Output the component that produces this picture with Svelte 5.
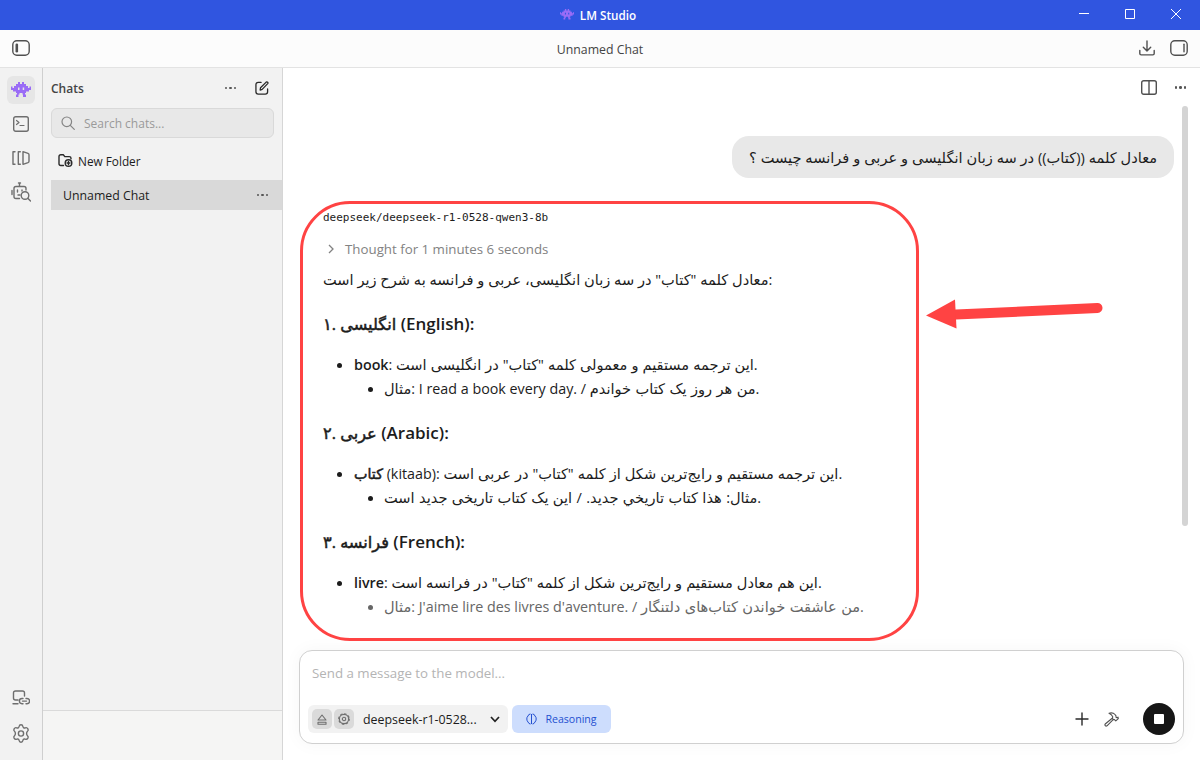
<script>
	const sections = [
		{
			number: '۱',
			name: 'انگلیسی',
			language: '(English):',
			term: 'book',
			rest: ': ',
			text: 'این ترجمه مستقیم و معمولی کلمه "کتاب" در انگلیسی است.',
			label: 'مثال',
			latin: ': I read a book every day. / ',
			sample: 'من هر روز یک کتاب خواندم.'
		},
		{
			number: '۲',
			name: 'عربی',
			language: '(Arabic):',
			term: 'کتاب',
			rtlTerm: true,
			rest: ' (kitaab): ',
			text: 'این ترجمه مستقیم و رایج‌ترین شکل از کلمه "کتاب" در عربی است.',
			label: '',
			latin: '',
			sample: 'مثال: هذا كتاب تاريخي جديد. / این یک کتاب تاریخی جدید است.'
		},
		{
			number: '۳',
			name: 'فرانسه',
			language: '(French):',
			term: 'livre',
			rest: ': ',
			text: 'این هم معادل مستقیم و رایج‌ترین شکل از کلمه "کتاب" در فرانسه است.',
			label: 'مثال',
			latin: ": J'aime lire des livres d'aventure. / ",
			sample: 'من عاشقت خواندن کتاب‌های دلتنگار.',
			faded: true
		}
	];
</script>

{#snippet invader(size)}
	<svg class="invader" width={size} height={size * 0.8} viewBox="0 0 20 16">
		<path
			fill="#9a6cf6"
			fill-rule="evenodd"
			d="M7 0h2v2h2V0h2v2h2v2h2v2h1.500V4.500H20V8h-2v1.500h-3V11h-1v1.500h1V15h-3v-2.500h-.5V11h-3v1.500H7.500V15H5v-2.500h1V11H5V9.500H2V8H0V4.500h1.500V6H3V4h2V2h2zM7 5.500V8h1.500V5.500zM11.700 5.500V8h1.500V5.500z"
		/>
	</svg>
{/snippet}

{#snippet dots(gap)}
	<span class="dots" style="gap: {gap}px"><i></i><i></i><i></i></span>
{/snippet}

<div class="app">
	<div class="titlebar">
		<div class="brand">
			{@render invader(14)}
			<b>LM Studio</b>
		</div>
		<div class="window-buttons">
			<svg width="12" height="12" viewBox="0 0 12 12"><path d="M1 5.500h10" /></svg>
			<svg width="12" height="12" viewBox="0 0 12 12"><path d="M1.500 1.500h9v9h-9z" /></svg>
			<svg width="12" height="12" viewBox="0 0 12 12"><path d="M1 1l10 10M11 1L1 11" /></svg>
		</div>
	</div>

	<header>
		<svg class="icon dark" width="18" height="16" viewBox="0 0 18 16">
			<rect x=".8" y=".8" width="16.400" height="14.400" rx="4" />
			<path d="M4.800 4.800v6.400" stroke-width="2.600" />
		</svg>
		<span class="title">Unnamed Chat</span>
		<div class="header-right">
			<svg class="icon dark" width="16" height="16" viewBox="0 0 16 16">
				<path d="M8 1v10M4.300 7.200L8 11l3.700-3.800M.8 10.500v3q0 1.400 1.400 1.400h11.600q1.400 0 1.400-1.400v-3" />
			</svg>
			<svg class="icon dark" width="18" height="16" viewBox="0 0 18 16">
				<rect x=".8" y=".8" width="16.400" height="14.400" rx="4" />
				<path d="M14 4.200v7.600" />
			</svg>
		</div>
	</header>

	<div class="body">
		<nav>
			<div class="nav-top">
				<div class="nav-item active">{@render invader(20)}</div>
				<div class="nav-item">
					<svg class="icon" width="16" height="16" viewBox="0 0 16 16">
						<rect x=".7" y=".7" width="14.600" height="14.600" rx="2" />
						<path d="M3.500 4.500L6 6.500 3.500 8.500M7 9.500h4" stroke-width="1.200" />
					</svg>
				</div>
				<div class="nav-item">
					<svg class="icon" width="18" height="14" viewBox="0 0 18 14">
						<path d="M3 .7H1v12.600h2M8.300 .7H6.300v12.600h2M11 .7v12.600l5-1.600q1-.4 1-1.400V3.700q0-1-1-1.400z" />
					</svg>
				</div>
				<div class="nav-item">
					<svg class="icon" width="20" height="20" viewBox="0 0 20 20">
						<path d="M8.500 4V1M7.500 1h2M8.500 16.500H5q-2 0-2-2V6.500q0-2 2-2h8q2 0 2 2V8M1 8.500v4M6.500 8v2M11 8v1M7 13h2" />
						<circle cx="14" cy="13.500" r="3.800" />
						<path d="M17 16.500l2.500 2.500" />
					</svg>
				</div>
			</div>
			<div class="nav-bottom">
				<svg class="icon" width="18" height="16" viewBox="0 0 18 16">
					<path d="M12.500 6V3q0-2-2-2H3.500q-2 0-2 2v5q0 2 2 2H6M1 13.800h5M11 8.500h-1a2.600 2.600 0 0 0 0 5.200h1M14 8.500h1a2.600 2.600 0 0 1 0 5.200h-1M10.500 11.100h4" />
				</svg>
				<svg class="icon" width="18" height="19" viewBox="0 0 18 19">
					<path
						d="M9 .8c1.200 0 1.700.5 1.900 1.700.2 1.200 1.200 1.800 2.400 1.300 1.300-.5 2 0 2.600 1 .6 1.100.5 1.700-.4 2.500-1.200 1-1.200 3.400 0 4.400.9.800 1 1.400.4 2.500-.6 1-1.300 1.500-2.600 1-1.200-.5-2.200.1-2.400 1.300-.2 1.200-.7 1.700-1.900 1.700s-1.700-.5-1.900-1.700c-.2-1.200-1.200-1.800-2.400-1.300-1.300.5-2 0-2.600-1-.6-1.100-.5-1.700.4-2.500 1.200-1 1.200-3.400 0-4.400-.9-.8-1-1.400-.4-2.500.6-1 1.300-1.500 2.600-1 1.200.5 2.200-.1 2.400-1.300C7.300 1.300 7.800.8 9 .8z"
					/>
					<circle cx="9" cy="9.500" r="2.600" />
				</svg>
			</div>
		</nav>

		<aside>
			<div class="chats-head">
				<span>Chats</span>
				{@render dots(2)}
				<svg class="icon black" width="14" height="14" viewBox="0 0 15 15">
					<path d="M6.500 1.500H3.500q-2.500 0-2.500 2.500v7.500q0 2.500 2.500 2.500H11q2.500 0 2.500-2.500V8.500M5.500 9.700l.4-2.400L12 1.200q.8-.6 1.500.1t.1 1.500L7.700 9z" />
				</svg>
			</div>
			<div class="search">
				<svg class="icon" width="14" height="14" viewBox="0 0 14 14">
					<circle cx="5.800" cy="5.800" r="4.800" />
					<path d="M9.300 9.300l4 4" />
				</svg>
				<span>Search chats...</span>
			</div>
			<div class="new-folder">
				<svg class="icon black" width="15" height="13" viewBox="0 0 15 13">
					<path d="M5.500 11.500H2.800q-1.800 0-1.800-1.800V2.500Q1 .8 2.800.8h2.500l1.500 1.800h4.400q1.800 0 1.800 1.600v.6" />
					<circle cx="10.500" cy="9" r="3.300" />
					<path d="M10.500 7.500v3M9 9h3" />
				</svg>
				<span>New Folder</span>
			</div>
			<div class="chat-row">
				<span>Unnamed Chat</span>
				{@render dots(2)}
			</div>
			<div class="aside-foot"></div>
		</aside>

		<main>
			<div class="toolbar">
				<svg class="icon dark" width="16" height="15" viewBox="0 0 16 15">
					<rect x=".7" y=".7" width="14.600" height="13.600" rx="2" />
					<path d="M8 1v13" />
				</svg>
				{@render dots(2)}
			</div>

			<div class="thread">
				<div class="bubble fa" dir="rtl">معادل کلمه ((کتاب)) در سه زبان انگلیسی و عربی و فرانسه چیست ؟</div>

				<div class="answer">
					<div class="model">deepseek/deepseek-r1-0528-qwen3-8b</div>
					<div class="thought">
						<svg width="6" height="10" viewBox="0 0 6 10"><path d="M1 1l4 4-4 4" /></svg>
						<span>Thought for 1 minutes 6 seconds</span>
					</div>
					<p class="fa">معادل کلمه "کتاب" در سه زبان انگلیسی، عربی و فرانسه به شرح زیر است:</p>
					{#each sections as s}
						<h3><span class="fa-bold">{s.number}. {s.name}</span> {s.language}</h3>
						<ul>
							<li>
								<strong class:fa-bold={s.rtlTerm}>{s.term}</strong>{s.rest}<span class="fa">{s.text}</span>
								<ul>
									<li class:faded={s.faded}><span class="fa">{s.label}</span>{s.latin}<span class="fa sample">{s.sample}</span></li>
								</ul>
							</li>
						</ul>
					{/each}
				</div>
			</div>

			<div class="composer">
				<div class="placeholder">Send a message to the model...</div>
				<div class="controls">
					<div class="model-picker">
						<span class="mini">
							<svg class="icon" width="10" height="11" viewBox="0 0 10 11"><path d="M5 1L9 6H1zM1 8.300h8v2H1z" /></svg>
						</span>
						<span class="mini">
							<svg class="icon" width="12" height="12" viewBox="0 0 12 12">
								<circle cx="6" cy="6" r="4.600" />
								<circle cx="6" cy="6" r="5.300" stroke-dasharray="1.600 2.560" />
								<circle cx="6" cy="6" r="1.700" />
							</svg>
						</span>
						<span class="name">deepseek-r1-0528...</span>
						<svg class="chevron" width="10" height="7" viewBox="0 0 10 7"><path d="M1 1l4 4.300L9 1" /></svg>
					</div>
					<div class="reasoning">
						<svg width="11" height="12" viewBox="0 0 11 12">
							<path d="M5.500 1v10M4.500 1Q2.500 1 2 3 .7 4 .8 6T2 9q.8 2 2.500 2M6.500 1Q8.500 1 9 3q1.300 1 1.200 3T9 9q-.8 2-2.500 2" />
						</svg>
						<span>Reasoning</span>
					</div>
					<div class="actions">
						<svg class="icon black" width="14" height="14" viewBox="0 0 14 14"><path d="M7 1v12M1 7h12" /></svg>
						<svg class="icon dark hammer" width="15" height="15" viewBox="0 0 15 15">
							<path d="M5 1.200Q9 .2 11 2.500l1 1.300v1.500l1 .5 1-.7.300 1.500-2.500 2.300-1.300-1.300-1.200-.2-1-1 .5-1.500Q8 2.500 5 1.200zM8.200 6.300L1.200 12q-.6 1 .1 1.700t1.700.1L9.400 7.300" />
						</svg>
						<div class="stop"><i></i></div>
					</div>
				</div>
			</div>
		</main>
	</div>

	<div class="scroll-thumb"></div>
	<div class="highlight"></div>
	<svg class="arrow" width="180" height="34" viewBox="0 0 180 34">
		<path d="M30 19.500L171.500 13" stroke="#ff4343" stroke-width="10" stroke-linecap="round" />
		<path d="M0 20.500L29 4.500l1.500 29z" fill="#ff4343" />
	</svg>
</div>

<style>
	:global(body) {
		margin: 0;
		background: #fff;
	}
	.app {
		position: relative;
		display: flex;
		flex-direction: column;
		width: 1200px;
		height: 760px;
		overflow: hidden;
		font-family: 'Open Sans', 'DejaVu Sans', sans-serif;
		font-size: 12.3px;
		color: #1c1c1c;
	}
	svg {
		display: block;
		flex: none;
		fill: none;
	}
	.icon {
		stroke: #6e6e6e;
		stroke-width: 1.4;
		stroke-linecap: round;
		stroke-linejoin: round;
	}
	.icon.dark {
		stroke: #505050;
	}
	.icon.black {
		stroke: #2a2a2a;
	}
	.dots {
		display: flex;
		color: #555;
	}
	.dots i {
		width: 2.5px;
		height: 2.5px;
		border-radius: 50%;
		background: currentColor;
	}

	.titlebar {
		display: grid;
		grid-template-columns: 1fr auto 1fr;
		align-items: center;
		height: 30px;
		background: #3055e0;
		color: #fff;
	}
	.brand {
		grid-column: 2;
		display: flex;
		align-items: center;
		gap: 6px;
		margin-right: 4px;
		font-size: 11.7px;
	}
	.brand b {
		font-weight: 600;
	}
	.window-buttons {
		display: flex;
		justify-content: flex-end;
		gap: 34px;
		padding: 0 18px 2px 0;
		stroke: #fff;
		stroke-width: 1;
	}

	header {
		display: grid;
		grid-template-columns: 1fr auto 1fr;
		align-items: center;
		box-sizing: border-box;
		height: 38px;
		padding: 0 12px 1px;
		border-bottom: 1px solid #e3e3e3;
		background: #fcfcfc;
	}
	.title {
		padding-top: 2px;
		color: #444;
	}
	.header-right {
		display: flex;
		justify-content: flex-end;
		gap: 15px;
	}

	.body {
		display: flex;
		flex: 1;
		min-height: 0;
	}
	nav {
		display: flex;
		flex-direction: column;
		justify-content: space-between;
		align-items: center;
		box-sizing: border-box;
		width: 43px;
		padding: 8px 0 17px;
		border-right: 1px solid #cfcfcf;
		background: #f2f2f2;
	}
	.nav-top {
		display: flex;
		flex-direction: column;
		gap: 6px;
	}
	.nav-item {
		display: grid;
		place-items: center;
		width: 28px;
		height: 28px;
		border-radius: 6px;
	}
	.nav-item.active {
		background: #e6e6e6;
	}
	.nav-bottom {
		display: flex;
		flex-direction: column;
		align-items: center;
		gap: 18px;
	}

	aside {
		display: flex;
		flex-direction: column;
		box-sizing: border-box;
		width: 240px;
		border-right: 1px solid #d6d6d6;
		background: #f2f2f2;
	}
	.chats-head {
		display: flex;
		align-items: center;
		height: 40px;
		padding: 0 13px 0 8px;
		font-weight: 600;
		font-size: 12px;
		color: #444;
	}
	.chats-head .dots {
		margin: 0 19px 0 auto;
	}
	.search {
		display: flex;
		align-items: center;
		gap: 9px;
		box-sizing: border-box;
		height: 30px;
		margin: 0 8px;
		padding-left: 9px;
		border: 1px solid #d9d9d9;
		border-radius: 6px;
		background: #e8e8e8;
		font-size: 12px;
		color: #9a9a9a;
	}
	.search .icon {
		stroke: #858585;
		stroke-width: 1.2;
	}
	.new-folder {
		display: flex;
		align-items: center;
		gap: 5px;
		height: 42px;
		padding: 3px 15px 0;
		box-sizing: border-box;
		font-size: 11.8px;
		font-weight: 500;
	}
	.chat-row {
		display: flex;
		justify-content: space-between;
		align-items: center;
		height: 30px;
		margin-left: 8px;
		padding: 0 14px 0 12px;
		background: #d9d9d9;
	}
	.aside-foot {
		height: 49px;
		margin-top: auto;
		border-top: 1px solid #dadada;
		background: #f5f5f4;
	}

	main {
		display: flex;
		flex-direction: column;
		flex: 1;
		min-width: 0;
		padding-right: 16px;
		background: #fff;
	}
	.toolbar {
		display: flex;
		justify-content: flex-end;
		align-items: center;
		gap: 18px;
		height: 39px;
		margin-right: -2px;
	}
	.thread {
		flex: 1;
		display: flex;
		flex-direction: column;
		min-height: 0;
		padding: 29px 10px 0 40px;
		font-size: 14.3px;
	}
	.bubble {
		align-self: flex-end;
		box-sizing: border-box;
		height: 42px;
		padding: 0 17px;
		border-radius: 17px;
		background: #e8e8e8;
		line-height: 42px;
		white-space: nowrap;
		word-spacing: 0.1px;
	}
	.fa {
		font-size: 14.6px;
	}
	.fa-bold {
		font-weight: 400;
		-webkit-text-stroke: 0.5px currentColor;
	}
	.answer {
		padding-top: 30px;
		line-height: 24px;
		white-space: nowrap;
	}
	.model {
		height: 18px;
		font-family: 'DejaVu Sans Mono', monospace;
		font-size: 11px;
		line-height: 19px;
	}
	.thought {
		display: flex;
		align-items: center;
		gap: 11px;
		height: 24px;
		margin-top: 11px;
		padding-left: 5px;
		font-size: 13.3px;
		color: #828282;
	}
	.thought svg {
		stroke: #828282;
		stroke-width: 1.3;
	}
	p {
		height: 24px;
		margin: 6px 0 21px;
	}
	h3 {
		height: 24px;
		margin: 20px 0 17px;
		font-size: 17px;
		font-weight: 600;
	}
	h3 .fa-bold {
		font-size: 16.2px;
	}
	ul {
		margin: 0;
		padding: 0;
		list-style: none;
	}
	li {
		position: relative;
		padding-left: 31px;
		line-height: 24px;
	}
	li span,
	li strong {
		line-height: 0;
	}
	li li {
		padding-left: 30px;
	}
	li .fa {
		word-spacing: 0.2px;
	}
	li .sample {
		word-spacing: 0.6px;
	}
	li::before {
		content: '';
		position: absolute;
		left: 14px;
		top: 10px;
		width: 5px;
		height: 5px;
		border-radius: 50%;
		background: currentColor;
	}
	strong {
		font-weight: 600;
	}
	.faded {
		color: #666;
	}

	.composer {
		display: flex;
		flex-direction: column;
		justify-content: space-between;
		box-sizing: border-box;
		height: 94px;
		margin: 0 0 16px 16px;
		padding: 13px 8px 8px;
		border: 1px solid #d0d0d0;
		border-radius: 13px;
		background: #fff;
		box-shadow: 0 0 18px rgba(0, 0, 0, 0.04);
	}
	.placeholder {
		padding-left: 4px;
		font-size: 13.3px;
		color: #b4b4b4;
	}
	.controls {
		display: flex;
		align-items: center;
		height: 32px;
	}
	.model-picker {
		display: flex;
		align-items: center;
		box-sizing: border-box;
		width: 200px;
		height: 28px;
		padding: 0 8px 0 4px;
		border-radius: 6px;
		background: #f2f2f2;
	}
	.mini {
		display: grid;
		place-items: center;
		width: 20px;
		height: 20px;
		margin-right: 2px;
		border-radius: 5px;
		background: #dadada;
	}
	.mini .icon {
		stroke-width: 1.1;
	}
	.name {
		margin-left: 7px;
		font-size: 12.4px;
	}
	.chevron {
		margin-left: auto;
		stroke: #222;
		stroke-width: 1.7;
	}
	.reasoning {
		display: flex;
		align-items: center;
		justify-content: center;
		gap: 8px;
		width: 99px;
		height: 28px;
		margin-left: 4px;
		border-radius: 6px;
		background: #cdddfd;
		font-size: 10.6px;
		font-weight: 500;
		color: #2450d0;
	}
	.reasoning svg {
		stroke: #2450d0;
	}
	.actions {
		display: flex;
		align-items: center;
		margin-left: auto;
	}
	.hammer {
		margin: 0 24px 0 15px;
		stroke-width: 1.1;
	}
	.stop {
		display: grid;
		place-items: center;
		width: 32px;
		height: 32px;
		border-radius: 50%;
		background: #161616;
	}
	.stop i {
		width: 10px;
		height: 10px;
		border-radius: 1px;
		background: #fff;
	}

	/* things that float above the window */
	.scroll-thumb {
		position: absolute;
		left: 1182px;
		top: 106px;
		width: 6px;
		height: 420px;
		border-radius: 3px;
		background: #d4d4d4;
	}
	.highlight {
		position: absolute;
		left: 300px;
		top: 201px;
		box-sizing: border-box;
		width: 619px;
		height: 440px;
		border: 3px solid #ff4343;
		border-radius: 50px;
	}
	.arrow {
		position: absolute;
		left: 926px;
		top: 295px;
	}
</style>
